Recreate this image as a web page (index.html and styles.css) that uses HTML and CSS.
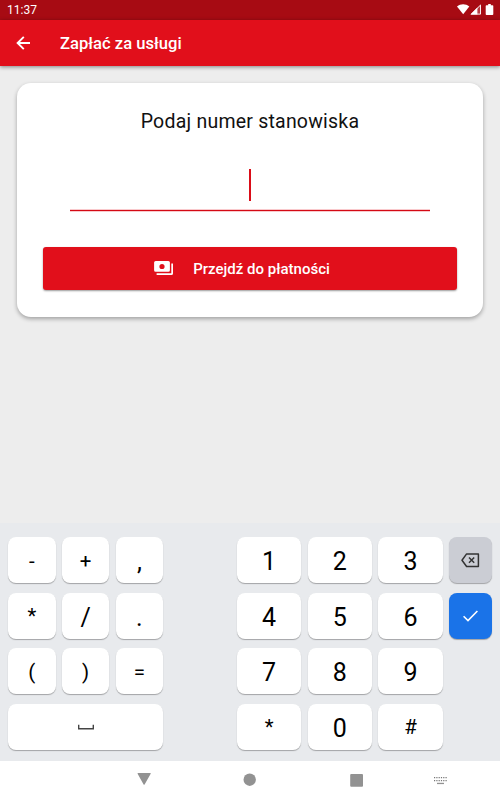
FILE: index.html
```html
<!DOCTYPE html>
<html lang="pl">
<head>
<meta charset="utf-8">
<title>Zapłać za usługi</title>
<link rel="stylesheet" href="styles.css">
</head>
<body>

<div class="status">
  <span class="time">11:37</span>
  <svg class="status-icons" width="38" height="12" viewBox="0 0 38 12">
    <path fill="#fff" d="M0 2.6C3.6-.4 8.7-.4 12.3 2.6L6.2 10.3z"/>
    <path fill="#fff" fill-opacity=".2" d="M13.4 10.6L24 0v10.6z"/>
    <path fill="#fff" d="M13.4 10.6L20.4 3.6v7z"/>
    <path fill="none" stroke="#fff" stroke-width=".9" d="M14.4 10.1L23.5 1.1v9z"/>
    <path fill="#fff" d="M31.2 0h2.6v1.2h1.7q.8 0 .8.8v8q0 .9-.8.9h-6q-.8 0-.8-.9V2q0-.8.8-.8h1.7z"/>
  </svg>
</div>

<div class="appbar">
  <svg class="back" width="15" height="14" viewBox="0 0 15 14">
    <path fill="none" stroke="#fff" stroke-width="1.9" d="M14 7H2M7.8 .8L1.6 7l6.2 6.2"/>
  </svg>
  <h1>Zapłać za usługi</h1>
</div>

<div class="content">
  <div class="card">
    <h2>Podaj numer stanowiska</h2>
    <div class="field"><span class="cursor"></span></div>
    <div class="button">
      <svg width="20" height="15" viewBox="0 0 20 15">
        <path fill="#fff" fill-rule="evenodd" d="M1.7 0h12.6q1.6 0 1.6 1.6v7.6q0 1.6-1.6 1.6H1.7Q.1 10.8.1 9.2V1.6Q.1 0 1.7 0zM8 2.9a2.6 2.6 0 1 0 0 5.2 2.6 2.6 0 0 0 0-5.2z"/>
        <path fill="#fff" d="M17.3 2.6h1.7v9.8q0 1.6-1.6 1.6H2.6v-1.7h14.7z"/>
      </svg>
      <span>Przejdź do płatności</span>
    </div>
  </div>
</div>

<div class="keyboard">
  <div class="symbols">
    <div class="key">-</div>
    <div class="key">+</div>
    <div class="key big">,</div>
    <div class="key">*</div>
    <div class="key big">/</div>
    <div class="key big">.</div>
    <div class="key">(</div>
    <div class="key">)</div>
    <div class="key">=</div>
    <div class="key space">
      <svg width="16" height="6" viewBox="0 0 16 6">
        <path fill="none" stroke="#444" stroke-width="1.4" d="M.7 .8v4h14.6v-4"/>
      </svg>
    </div>
  </div>
  <div class="digits">
    <div class="key">1</div>
    <div class="key">2</div>
    <div class="key">3</div>
    <div class="key delete">
      <svg width="19" height="15" viewBox="0 0 19 15">
        <path fill="none" stroke="#333" stroke-width="1.5" stroke-linejoin="round" d="M5.6 .9h11.8v12.6H5.6L1 7.2z"/>
        <path fill="none" stroke="#333" stroke-width="1.5" d="M8 4.5l5.2 5.2M13.2 4.5L8 9.7"/>
      </svg>
    </div>
    <div class="key">4</div>
    <div class="key">5</div>
    <div class="key">6</div>
    <div class="key enter">
      <svg width="16" height="12" viewBox="0 0 16 12">
        <path fill="none" stroke="#fff" stroke-width="1.6" d="M.6 6.2L5 10.6 14.4 1"/>
      </svg>
    </div>
    <div class="key">7</div>
    <div class="key">8</div>
    <div class="key">9</div>
    <div class="key small first">*</div>
    <div class="key">0</div>
    <div class="key small">#</div>
  </div>
</div>

<div class="navbar">
  <svg width="500" height="39" viewBox="0 0 500 39">
    <g fill="#929292">
      <path d="M138.2 12h12q.9 0 .5.8l-6.1 10.6q-.5.8-1 0l-6-10.6q-.4-.8.6-.8z"/>
      <circle cx="249.7" cy="18.7" r="6.2"/>
      <rect x="350.2" y="13" width="12.8" height="12.8" rx="1"/>
      <rect x="437" y="21.8" width="7" height="1.3"/>
    </g>
    <path fill="none" stroke="#777" stroke-width="1.1" stroke-dasharray="1.2 1.1" d="M434 16.6h13.2M434 19.6h13.2"/>
  </svg>
</div>

</body>
</html>
```

FILE: styles.css
```css
body {
  margin: 0;
  height: 800px;
  display: flex;
  flex-direction: column;
  overflow: hidden;
  background: #ededed;
  font-family: Roboto, sans-serif;
}

svg {
  display: block;
}

.status {
  height: 20px;
  display: flex;
  align-items: center;
  justify-content: space-between;
  box-sizing: border-box;
  padding: 0 5px 0 7px;
  background: #a70b13;
  color: #fff;
}
.time {
  font-size: 12px;
  line-height: 20px;
}

.appbar {
  height: 46px;
  display: flex;
  align-items: center;
  padding-left: 16px;
  background: #e10f1b;
  color: #fff;
  box-shadow: 0 1px 4px rgba(0,0,0,.45);
}
h1 {
  margin: 1px 0 0 29px;
  font-size: 16.6px;
  font-weight: 500;
}

.content {
  flex: 1;
  padding: 17px 17px 0;
}
.card {
  height: 234px;
  box-sizing: border-box;
  padding: 27px 26px 0;
  border-radius: 14px;
  background: #fff;
  box-shadow: 0 2px 4px rgba(0,0,0,.32);
}
h2 {
  margin: 0;
  text-align: center;
  font-size: 19.5px;
  font-weight: 400;
  line-height: 24px;
  letter-spacing: .22px;
  color: #111;
}
.field {
  height: 41px;
  margin: 35px 27px 0;
  border-bottom: 1px solid #d40914;
  box-shadow: inset 0 -1px #f9c9cc, 0 1px #f9c9cc;
}
.cursor {
  display: block;
  width: 1.5px;
  height: 32px;
  margin: 0 auto;
  background: #da0d18;
}
.button {
  height: 43px;
  margin-top: 36px;
  padding-right: 16px;
  display: flex;
  align-items: center;
  justify-content: center;
  gap: 19px;
  border-radius: 3px;
  background: #e10f1b;
  box-shadow: 0 1px 2px rgba(0,0,0,.4);
  color: #fff;
  font-size: 15px;
  font-weight: 500;
}

.keyboard {
  height: 238px;
  box-sizing: border-box;
  padding: 14px 8px 0;
  display: flex;
  justify-content: space-between;
  background: #e8eaed;
}
.symbols, .digits {
  display: grid;
  grid-auto-rows: 46px;
  row-gap: 9.6px;
  align-content: start;
}
.symbols {
  grid-template-columns: repeat(3, 47.6px);
  column-gap: 6.2px;
}
.digits {
  grid-template-columns: repeat(3, 64.3px) 43px;
  column-gap: 6.4px;
}
.key {
  box-sizing: border-box;
  padding-top: 1px;
  display: flex;
  align-items: center;
  justify-content: center;
  border-radius: 8px;
  background: #fff;
  box-shadow: 0 1px 1px rgba(0,0,0,.3);
  font-size: 20.5px;
  color: #000;
}
.digits .key {
  padding-top: 3px;
  font-size: 25px;
}
.symbols .big {
  padding-top: 3px;
  font-size: 25px;
}
.digits .small {
  padding-top: 1px;
  font-size: 20.5px;
}
.first {
  grid-column: 1;
}
.space {
  grid-column: span 3;
}
.digits .delete {
  padding-top: 1px;
  background: #cbcdd4;
}
.digits .enter {
  padding-top: 1px;
  background: #1a73e8;
}

.navbar {
  height: 39px;
  background: #fff;
}
```
